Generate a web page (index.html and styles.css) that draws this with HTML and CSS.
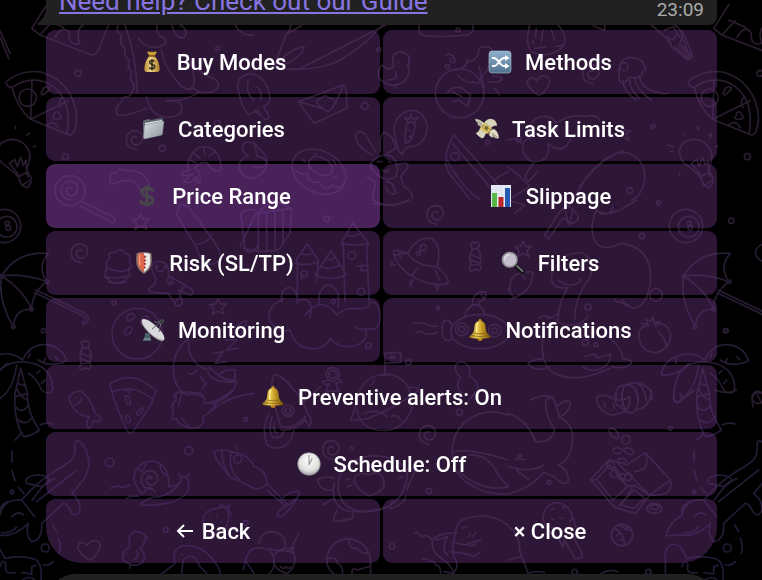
FILE: index.html
```
<!DOCTYPE html>
<html lang="en">
<head>
  <meta charset="UTF-8" />
  <title>Bot Settings</title>
  <meta name="viewport" content="width=device-width, initial-scale=1.0" />
  <link rel="stylesheet" href="styles.css">
</head>
<body>

  <!-- Chat wallpaper -->
  <svg class="wallpaper" viewBox="0 0 2286 1740" preserveAspectRatio="xMidYMin slice" aria-hidden="true">
    <defs>
      <linearGradient id="ink" gradientUnits="userSpaceOnUse" x1="0" y1="0" x2="900" y2="1700">
        <stop offset="0" stop-color="#2b1d2c" />
        <stop offset="1" stop-color="#211a38" />
      </linearGradient>
      <path id="swirl" d="M4 28Q-28 24-26-4Q-22-30 4-28Q26-22 22 0Q16 18-2 14Q-14 8-10-4Q-4-14 6-8" />
      <path id="star" d="M0-24L7-8 25-8 12 5 18 23 0 13-17 24-12 5-25-6-7-8Z" />
      <path id="candy" d="M-12-40Q-8-50 0-42Q12-50 13-36L9-26Q22-6 14 20Q22 38 10 40Q0 32-10 42Q-24 38-12 24Q-20-4-9-24ZM-14-8L14 2M-14 8L14 18M-9-24L9-26M-12 24L14 20" />
      <path id="heart" d="M0 30Q-38 4-34-12Q-26-32-6-14Q8-36 28-24Q42-8 12 24Z" />
    </defs>

    <!-- doodles that meet the left edge, repeated on the right -->
    <g id="edge" class="doodle">
      <path d="M140 15L95 85 120 105 275 165Q290 165 297 145L326 75M120 105L160 62M165 112Q190 70 208 100Q204 140 240 130Q225 90 250 75M140 60L190 82" />
      <path d="M0 92L30 160M0 112L26 175" />
      <path d="M18 246Q60 208 122 216Q195 236 220 305Q238 350 222 395Q214 410 200 402L92 358Q52 325 36 262Q20 262 18 246ZM36 262Q80 232 130 244Q190 268 202 330Q208 370 200 402M96 240L92 358L205 302M183 322A20 20 0 0 1 186 292M130 264Q148 255 148 268Q140 276 128 285Q118 280 128 272ZM164 338Q176 330 180 346Q190 354 172 358Q152 358 162 348ZM138 378Q158 355 176 384" />
      <circle cx="83" cy="293" r="26" />
      <path d="M54 530Q36 510 4 488Q-20 450 6 428Q36 408 68 428Q98 452 86 490Q76 510 84 530M54 530L84 516 95 538 66 556ZM66 556L82 564 94 546M60 530L28 490 44 478 52 500 62 472 70 496 78 480 80 520M45 380L47 386M88 400L81 405M107 438L100 441" />
      <circle cx="234" cy="220" r="9" /><circle cx="196" cy="470" r="9" />
      <circle cx="12" cy="678" r="50" /><circle cx="20" cy="680" r="31" />
      <circle cx="22" cy="670" r="6" /><circle cx="25" cy="684" r="7" />
      <path d="M5 828Q50 752 145 760Q110 800 140 845Q95 880 95 928Q45 925 40 980Q-8 900 5 828ZM5 828Q70 818 140 845M5 828Q70 870 95 928M105 878L245 945Q265 955 250 965Q245 975 255 972Q275 960 255 940L108 870" />
      <circle cx="5" cy="828" r="5" /><circle cx="142" cy="845" r="5" /><circle cx="94" cy="928" r="5" /><circle cx="40" cy="980" r="5" /><circle cx="130" cy="992" r="6" />
      <path d="M68 1080Q30 1050-12 1068Q-55 1080-62 1125Q-15 1130 20 1090M68 1080Q90 1030 140 1034Q185 1040 200 1082Q150 1105 115 1080M20 1095Q50 1080 100 1090Q160 1110 158 1170Q145 1188 125 1170Q110 1135 85 1120M20 1095Q-25 1120-24 1190Q-20 1220 0 1195Q40 1170 50 1095M-20 1075L-18 1090M90 1060L85 1072M132 1084L136 1075M165 1070L174 1080M110 1120L120 1112M125 1150L135 1140M62 1105L45 1180Q40 1260 70 1310Q95 1308 118 1290Q80 1235 82 1180L62 1105M52 1150L78 1158M46 1190L84 1180M47 1220Q65 1245 86 1215M55 1260Q80 1280 98 1250M50 1165Q60 1190 82 1200" />
      <path d="M120 1275Q140 1266 160 1272M66 1298L45 1320M36 1355V1385M36 1412Q40 1430 46 1442M55 1462L72 1480" />
      <path d="M-48 1605Q-40 1570 0 1545Q10 1495 65 1500Q115 1440 195 1395Q230 1375 225 1340Q225 1310 245 1330Q285 1385 250 1440L215 1480Q242 1500 240 1530Q225 1560 210 1530Q200 1510 190 1510L125 1570Q128 1620 95 1625Q75 1605 85 1570Q40 1615-10 1604Q-40 1610-48 1605ZM65 1500Q80 1520 104 1550M0 1545Q-5 1520 20 1505M97 1500Q130 1450 165 1435M110 1505L230 1410M80 1450Q70 1430 110 1425Q140 1425 150 1440L125 1460ZM5 1598Q35 1600 50 1580M35 1550Q55 1530 70 1545" />
      <circle cx="36" cy="1476" r="5" /><circle cx="136" cy="1644" r="12" />
      <path d="M158 1575L170 1595M175 1615Q185 1640 178 1660M160 1685Q145 1700 130 1694M-50 1740V1655Q-35 1620-5 1640L15 1675Q70 1665 105 1678Q128 1690 123 1740M0 1700Q10 1670 18 1695Q10 1725 45 1718M66 1718L95 1722V1700L108 1696M68 1740Q90 1725 105 1740" />
    </g>
    <use href="#edge" x="2046" />

    <g class="doodle">
      <path d="M355 75Q345 100 365 105Q355 130 375 145Q370 170 388 180Q378 200 395 215Q385 240 403 255Q400 280 385 290Q365 290 365 305Q340 325 352 345Q380 350 440 325M375 75Q410 170 412 280M440 290Q450 350 500 352Q550 350 545 320Q540 300 510 300M415 115Q440 150 480 140Q510 125 490 112Q470 110 470 75M485 150Q490 200 545 260Q580 280 582 250Q585 210 560 165Q590 220 640 235Q670 255 640 275Q600 285 575 262M500 302Q545 310 600 275M515 75Q530 125 555 110Q565 85 540 75M705 75Q725 110 762 105" />
      <circle cx="653" cy="145" r="6" /><circle cx="487" cy="445" r="9" /><circle cx="652" cy="370" r="9" />
      <use href="#swirl" x="405" y="420" />
      <path d="M665 510Q660 440 610 440Q575 445 562 495L568 512Q540 515 545 525Q565 530 580 520L550 545Q575 555 590 530Q590 560 600 545Q605 520 585 505Q605 480 625 492Q640 520 665 510ZM580 458L600 475M610 442L615 465M645 455L625 470M570 480L590 490" />
      <path d="M715 270Q705 230 750 220Q800 230 808 285Q815 310 790 320L808 350Q795 375 775 330L745 345Q720 310 715 270ZM745 240Q735 280 762 300M770 260Q790 275 780 300" />
      <path d="M718 490Q730 470 745 468Q715 445 735 428Q765 420 775 445Q810 470 798 500Q790 525 755 535Q715 530 718 490" />
      <circle cx="210" cy="572" r="45" /><use href="#swirl" x="210" y="572" />
      <path d="M248 605L340 650Q350 660 338 668L240 618M350 548Q325 560 332 538Q325 515 350 520Q355 500 370 512Q440 505 450 565Q430 590 415 560Q400 530 350 548" />
      <!-- castle on a cloud -->
      <path d="M892 910V790L888 780 922 732 955 780 950 845M888 790Q920 800 955 785M905 760Q922 770 940 758M945 825L993 752 1040 825Q990 845 945 825ZM965 800Q990 812 1020 795M980 775Q992 785 1005 772M1035 905L1030 735 1024 730 1058 668 1106 730 1100 740 1108 920M1024 730Q1065 740 1106 730M1040 705Q1058 712 1080 702M958 915V880Q985 830 1015 880V925M905 830V840M1070 800L1105 795M1080 810L1100 812M1085 790V815M845 900Q840 865 870 862Q890 865 892 900Q945 890 930 950M845 900Q800 920 808 960Q830 1000 870 990Q890 1055 955 1045Q985 1035 990 1015Q1020 1050 1070 1035Q1110 1020 1095 985Q1145 1000 1140 940Q1130 895 1110 910Q1105 930 1060 925Q1030 925 1010 945Q980 900 940 920L915 945M850 895L845 905M1065 980Q1085 995 1095 985" />
      <circle cx="1055" cy="767" r="12" /><circle cx="912" cy="821" r="9" /><circle cx="1083" cy="875" r="11" /><circle cx="1000" cy="905" r="6" /><circle cx="1105" cy="1037" r="8" /><circle cx="980" cy="657" r="8" />
      <!-- gift, pencils, star -->
      <path d="M720 740L768 640 820 600 875 625 870 700 835 750Q780 760 730 745M768 640L875 625M775 640V750M800 637V750M825 635V750M850 630L848 735M530 645L538 612 565 620M530 645L585 735 605 780Q640 810 665 770L650 735 565 620M585 735Q625 730 635 705M722 640Q740 625 765 630M722 640L735 745Q750 770 770 740" />
      <use href="#star" x="422" y="665" /><use href="#star" x="654" y="920" />
      <use href="#swirl" x="240" y="760" /><use href="#candy" x="256" y="1068" />
      <!-- cupcake and gingerbread man -->
      <path d="M325 805Q310 790 330 775Q318 755 345 758Q360 740 375 760Q395 760 388 785Q405 800 385 810Q355 820 325 805ZM320 800L315 830Q350 870 390 825L385 805M315 830Q355 840 390 825M325 845Q350 855 380 845" />
      <path d="M465 830Q440 790 475 784Q510 785 505 825L570 865Q590 880 570 885L535 870 548 905Q540 925 528 915L505 880 465 878Q440 875 448 865Q475 850 465 830ZM468 808Q478 820 492 808M505 855L520 850M545 870L555 858M525 905L540 892" />
      <circle cx="510" cy="840" r="8" /><circle cx="497" cy="800" r="3" /><circle cx="470" cy="800" r="3" />
      <circle cx="412" cy="1001" r="76" /><circle cx="342" cy="909" r="6" />
      <ellipse cx="392" cy="951" rx="13" ry="9" transform="rotate(-35 392 951)" /><ellipse cx="434" cy="962" rx="15" ry="10" transform="rotate(-60 434 962)" /><ellipse cx="385" cy="992" rx="14" ry="9" transform="rotate(-50 385 992)" />
      <!-- sleeping moon -->
      <path d="M565 1015Q510 1060 522 1130Q530 1170 560 1185M565 1015Q560 1090 625 1110M565 1118Q575 1130 590 1110M600 1130L620 1150 605 1165M625 1100L655 1125Q680 1105 705 1110V1140Q680 1145 655 1125M625 1120Q640 1150 710 1145Q700 1190 640 1210M640 1060L670 1055 645 1090 680 1085M675 1020L710 1020 680 1050 715 1045M700 985Q720 970 740 960Q740 985 715 1010M520 1190Q540 1160 560 1185Q600 1170 610 1190" />
      <!-- watermelon and fish -->
      <path d="M330 1152Q395 1105 468 1172L455 1210 400 1295Q388 1305 380 1290L342 1200ZM336 1175Q400 1150 456 1196M375 1190Q385 1180 390 1200Q395 1220 382 1212ZM415 1230Q440 1215 425 1235Q412 1255 410 1240ZM378 1245Q390 1245 392 1260Q385 1275 378 1260ZM375 1172L390 1165 388 1180M208 1195Q215 1170 245 1175Q275 1200 285 1240Q315 1255 295 1265L280 1262Q275 1285 265 1285Q255 1270 268 1250Q220 1245 208 1195ZM230 1190V1192M225 1215Q240 1210 245 1195" />
      <path d="M520 1240Q510 1210 530 1200Q520 1170 545 1180Q575 1170 585 1185Q620 1185 612 1210L650 1208Q640 1230 610 1250Q615 1285 575 1285Q530 1275 530 1255Q510 1265 520 1240M545 1180L535 1220M570 1285L545 1255M612 1210Q650 1210 700 1170M635 1232Q680 1190 762 1180" />
      <circle cx="737" cy="1258" r="6" /><circle cx="566" cy="1352" r="12" /><circle cx="329" cy="1387" r="13" />
      <!-- snail -->
      <path d="M420 1515Q440 1490 480 1490Q520 1480 545 1440Q535 1425 550 1430Q570 1430 565 1470Q550 1500 500 1510Q450 1518 420 1515ZM540 1428L536 1420M563 1430L568 1422M425 1480Q385 1435 415 1400Q460 1365 495 1405Q510 1430 505 1460L530 1455M415 1400Q425 1430 438 1393M480 1390Q480 1420 505 1430M430 1480Q445 1450 465 1475M455 1435Q440 1440 445 1425M332 1465Q350 1455 360 1460Q375 1465 388 1455M380 1495Q395 1485 415 1490" />
      <use href="#swirl" x="450" y="1440" />
      <!-- cornetto and ice cream -->
      <path d="M642 1355Q660 1345 695 1355Q750 1365 762 1400Q800 1410 800 1450Q790 1470 762 1465L690 1430 650 1380ZM665 1350Q665 1390 690 1430M695 1355Q680 1410 720 1440M710 1350V1340M800 1450L865 1515Q905 1485 898 1475Q870 1470 840 1500M865 1515Q830 1530 832 1548Q850 1560 895 1490M800 1470L860 1520" />
      <circle cx="713" cy="1377" r="12" />
      <path d="M610 1560Q610 1530 650 1525Q690 1510 685 1560Q680 1595 640 1600Q600 1610 610 1560M655 1525L665 1512 675 1522 690 1515 684 1530 695 1545M630 1550V1552M650 1550V1552M640 1570V1572M665 1565V1567" />
      <circle cx="497" cy="1590" r="7" /><circle cx="737" cy="1568" r="7" />
      <use href="#heart" x="268" y="1650" />
      <path d="M390 1640Q380 1600 410 1594Q440 1600 435 1615L443 1612 435 1620Q430 1640 420 1645Q445 1670 425 1690Q400 1705 370 1680Q360 1655 390 1640ZM410 1650Q420 1670 400 1680M390 1690V1705M378 1660V1662" />
      <path d="M485 1722L525 1690Q515 1650 545 1638Q600 1630 640 1680Q665 1710 662 1740M545 1720L550 1680Q580 1650 600 1700L620 1720M545 1662V1664M730 1710Q740 1650 762 1645M735 1680L762 1720" />
    </g>

    <g class="doodle" transform="translate(762 0)">
      <path d="M60 200L95 105 145 75M60 200Q110 145 150 140Q150 165 90 195M95 105Q110 90 110 75M385 75Q330 140 250 185Q180 215 70 205M395 75L140 205M495 75Q490 110 525 108Q580 112 640 105Q665 95 655 75" />
      <circle cx="375" cy="149" r="6" /><circle cx="612" cy="90" r="6" />
      <path d="M420 200Q405 160 440 155Q475 165 463 185L470 188 460 195Q475 215 450 245Q410 270 375 235Q368 210 385 195Q400 215 420 200M425 215Q435 240 400 240M425 255V265M435 185V187" />
      <path d="M133 305L268 255Q280 260 278 325L180 370ZM133 305L205 325M268 255L245 310M205 325Q175 300 200 295Q215 280 225 295Q250 290 238 320L222 335Z" />
      <circle cx="332" cy="318" r="10" />
      <path d="M0 330L15 345" />
      <ellipse cx="195" cy="515" rx="85" ry="62" transform="rotate(28 195 515)" /><ellipse cx="200" cy="498" rx="38" ry="25" transform="rotate(28 200 498)" />
      <path d="M125 510Q145 530 160 520Q165 555 195 545Q215 580 235 555Q260 575 270 545M145 480L155 485M180 465L190 460M235 480L245 490M240 530L250 535M165 500V508M0 500Q25 510 40 490Q30 470 10 470L0 430" />
      <path d="M355 465Q305 440 305 405Q315 385 335 405L365 455M380 455Q375 405 390 398Q420 405 425 445L400 460M350 490Q380 455 415 470Q440 500 425 530Q400 550 365 520Q350 510 350 490M370 485L385 485M405 485L410 488M425 495Q470 480 460 505L440 530 450 560Q475 570 475 595M340 530L365 545 355 600M385 510Q395 520 405 510M395 545Q420 545 425 580Q405 590 395 560" />
      <path d="M435 455L445 462Q450 445 465 440Q515 440 520 380Q510 330 470 331Q420 345 420 390Q425 425 435 455ZM460 370Q450 395 455 430Q475 425 485 375Q475 360 460 370ZM460 365L452 352 465 358 470 342 475 358 492 350 480 368M460 390L470 393M465 410L475 405" />
      <circle cx="617" cy="280" r="73" />
      <path d="M605 210Q640 205 640 180Q650 190 665 175Q675 165 675 145Q710 130 720 160L705 180Q710 210 680 230Q680 260 660 245Q640 255 610 225M580 280Q595 255 625 265L650 285 640 320 615 300 595 305M575 165Q595 155 605 185Q590 195 588 175M675 200L690 260M715 230Q740 225 745 240Q725 250 705 245M720 265Q730 270 735 285M595 275L625 290" />
      <circle cx="580" cy="200" r="6" /><circle cx="603" cy="470" r="12" /><circle cx="701" cy="427" r="6" />
      <path d="M600 405Q560 470 585 520L650 600M600 405L720 540Q740 525 762 515M595 430L715 570M580 480Q620 560 680 600M720 540L762 600M358 600Q410 630 465 600" />
    </g>

    <g class="doodle" transform="translate(1524 0)">
      <path d="M65 75Q50 130 70 155Q110 175 155 150Q175 130 170 110Q165 90 150 75M75 120V130M85 85L82 110M105 90L100 125M130 90L140 120M80 145L115 140M145 140L165 135M255 75Q280 90 290 90V75" />
      <use href="#heart" x="92" y="256" /><use href="#swirl" x="250" y="222" />
      <path d="M430 75L470 110Q490 130 490 140L540 180M500 75Q535 100 515 130L555 170M480 110Q490 130 505 105M500 140L545 178M510 135L550 175M470 90L495 80 515 110" />
      <path d="M335 225Q325 180 365 172Q410 175 410 205Q420 210 405 215Q395 240 365 232Q345 260 332 240ZM345 240Q345 275 385 300M365 240Q365 270 395 295M380 235Q385 270 430 300M395 230Q400 270 455 278Q470 285 480 278" />
      <circle cx="348" cy="200" r="12" /><circle cx="435" cy="379" r="6" />
      <path d="M70 415Q50 365 100 350Q130 345 145 370Q185 340 230 350Q265 340 275 360M45 455Q40 415 70 415M45 455Q60 490 85 485Q130 480 120 430Q170 470 190 410M130 390Q150 400 150 380M0 420Q30 410 40 430M75 490L50 530 60 545 90 515M0 500Q40 530 65 560L0 600" />
      <circle cx="32" cy="418" r="8" />
      <path d="M345 375L350 392 368 392 355 402 362 420 345 410" />
      <path d="M215 560Q290 450 360 458Q415 480 410 540Q400 590 370 600M200 590Q260 480 345 452" />
      <circle cx="365" cy="572" r="9" />
      <path d="M525 400L530 405M480 435L497 440M485 455L497 453M515 520V525M570 380L572 388M610 405L605 415" />
    </g>

    <g class="doodle" transform="translate(762 600)">
      <use href="#swirl" x="545" y="45" /><use href="#candy" x="663" y="172" />
      <path d="M420 155Q415 145 460 160Q490 110 530 115Q565 130 550 200Q590 235 580 250Q530 265 460 220Q415 180 420 155ZM460 160Q490 200 550 200M460 160Q445 160 425 165M490 205L475 225M545 210L555 240M435 160L440 175M415 185L412 195 425 195M470 240L468 260 478 240M545 255L550 270 555 255M360 10Q415 25 465 0" />
      <circle cx="508" cy="143" r="9" /><circle cx="493" cy="160" r="6" />
      <!-- submarine -->
      <ellipse cx="678" cy="395" rx="88" ry="51" /><circle cx="623" cy="388" r="19" /><circle cx="623" cy="388" r="9" /><circle cx="722" cy="392" r="19" /><circle cx="722" cy="392" r="8" />
      <path d="M632 345Q645 315 665 313Q690 320 692 343M655 313Q655 275 695 275Q700 300 675 305V313M680 280L690 298M594 375L585 362Q565 358 565 375V405Q570 425 590 420L595 405M475 373Q485 362 495 373Q510 362 520 375Q530 380 552 378M485 398Q500 390 510 400Q530 405 550 398" />
      <circle cx="552" cy="323" r="5" /><circle cx="463" cy="487" r="8" />
      <!-- astronaut, planet, rocket -->
      <path d="M393 525V460L440 457V487L393 490M405 475Q415 460 425 475ZM318 570Q340 525 395 522Q450 525 470 580M385 525Q395 530 405 520M350 555Q360 550 360 540M318 570Q310 610 290 660Q330 665 380 640Q440 610 490 575Q500 560 465 562M310 630Q315 680 370 690Q450 700 475 620M330 640Q370 625 400 650M410 650Q430 640 440 660" />
      <circle cx="236" cy="523" r="20" /><circle cx="236" cy="523" r="12" />
      <path d="M222 540L205 545 215 555 225 550 215 575 235 572 255 575 245 550 265 545 250 535M55 540L60 525Q80 520 120 570L145 600M55 540L50 600M60 610L80 680M145 600L160 640Q180 665 165 680L150 650M80 680Q120 690 155 650M80 690Q120 695 155 660M145 610L200 560M605 495Q615 480 635 490Q655 505 645 530Q675 540 670 570L645 600M605 495Q600 520 620 530Q600 560 625 580" />
      <circle cx="102" cy="632" r="17" /><circle cx="102" cy="632" r="8" />
      <path d="M45 640Q20 690 40 735Q80 760 110 720L120 690M55 650Q40 685 55 710Q80 720 90 695M60 670Q55 690 70 700" />
    </g>

    <g class="doodle" transform="translate(1524 600)">
      <path d="M110 105L155 35 180 15 210 45Q215 65 190 70L165 55 120 118ZM170 20L180 70M195 25L185 75M0 0L50 15 20 40M265 30Q300 60 385 0M265 30Q240 90 265 130Q290 155 340 130Q430 140 428 240Q420 320 375 325L350 310M275 40Q310 50 315 15M320 297Q325 310 335 305L360 318M345 300L350 310" />
      <circle cx="452" cy="8" r="6" /><circle cx="402" cy="108" r="8" /><circle cx="444" cy="285" r="19" /><circle cx="240" cy="321" r="9" /><circle cx="232" cy="428" r="9" /><circle cx="264" cy="434" r="6" />
      <use href="#star" x="45" y="147" />
      <path d="M5 270Q5 220 40 220Q75 210 75 220Q70 270 35 285L10 298M0 265L15 290M40 220L50 235" />
      <!-- sea serpent -->
      <path d="M165 175Q185 155 225 160Q265 180 245 235Q200 290 200 360M130 240Q130 200 155 190M130 240Q140 270 180 262Q150 310 150 360M150 240Q190 270 220 240L212 235M145 360Q170 385 215 370Q240 355 240 345M92 355Q105 345 120 350M120 355Q140 350 150 340M105 370Q100 380 115 385M240 375Q220 370 215 380M105 400Q95 480 125 510Q190 560 305 505M105 475Q70 480 60 490Q80 520 125 500M300 410Q340 440 345 475M230 470Q265 455 270 475L308 462Q310 490 280 505Q250 520 225 500M345 475Q375 480 370 490Q345 510 310 500" />
      <path d="M400 370L420 372 412 355 428 365 435 350 438 368 455 365 442 378M425 375Q390 380 392 410Q400 455 440 458Q490 450 488 400Q475 365 440 372M450 395Q475 420 475 440" />
      <path d="M325 600Q315 560 350 555Q400 535 430 575L432 600M350 555Q335 590 345 610M350 555Q385 550 390 600M385 548Q410 560 415 600M65 600Q110 580 130 590L140 600" />
      <circle cx="670" cy="62" r="8" /><circle cx="655" cy="392" r="6" /><circle cx="768" cy="158" r="25" /><circle cx="750" cy="592" r="18" />
    </g>

    <g class="doodle" transform="translate(762 1170)">
      <use href="#swirl" x="522" y="135" /><use href="#swirl" x="232" y="180" />
      <circle cx="616" cy="67" r="9" /><circle cx="292" cy="176" r="5" /><circle cx="525" cy="303" r="8" /><circle cx="414" cy="469" r="8" />
      <!-- balloon fish -->
      <path d="M260 250Q300 200 360 197Q440 200 460 250Q455 330 390 355Q310 380 270 340Q240 300 260 250ZM240 265Q210 255 190 270Q200 305 235 300M250 245Q260 230 270 235L262 250M455 240Q480 230 482 245L458 300M250 360Q235 385 240 395Q275 390 295 385Q300 375 295 365M205 345L240 325M240 280Q230 340 270 360Q330 375 400 350M455 320Q450 345 410 355Q400 345 420 335M275 270L290 265M280 290L295 285M435 265L445 260" />
      <path d="M345 318Q300 290 300 270Q310 240 345 255Q370 240 385 260Q400 290 375 305Z" />
      <!-- whale -->
      <path d="M762 75Q700 50 640 90Q590 130 595 200Q600 260 660 290Q700 315 762 312M600 185Q650 175 762 210M645 195Q700 190 730 250Q750 280 762 285M615 245Q690 310 762 290" />
      <!-- scoops, globe, walrus -->
      <path d="M15 460Q20 425 55 424Q95 430 95 470Q75 490 45 475M0 475Q35 470 55 490Q70 530 45 552M60 495Q80 470 120 490Q130 530 100 550Q70 545 60 520M80 530Q90 540 95 530Q105 540 110 530M105 485L115 470 135 428M98 475L118 475 115 490M285 445Q225 450 218 510Q220 540 240 552M285 445Q350 460 350 520V552M285 450Q285 480 310 475Q320 490 340 490M222 505Q250 500 250 520Q270 530 265 552M295 550Q290 530 310 540L345 530" />
      <path d="M482 430Q495 425 500 440Q520 430 535 450M505 508Q520 505 530 515Q540 510 545 525Q560 525 560 550M535 450Q560 425 605 430Q590 470 600 500Q620 530 595 550M535 450Q530 480 555 500Q590 520 600 550M545 450Q570 445 580 440Q560 475 580 495M605 430Q605 400 625 390Q700 360 762 405M600 455Q630 470 645 460L680 450M625 450V452M625 415L640 408M645 440L650 430M655 440L665 428M640 460Q650 475 665 462M590 485Q640 490 660 500L680 485M570 545L600 550" />
    </g>

    <g class="doodle" transform="translate(1524 1170)">
      <path d="M0 70Q60 90 82 155Q130 160 140 120Q105 60 115 30Q135 5 145 50Q180 20 187 40Q185 65 155 82Q195 100 194 150Q190 210 150 225Q185 240 180 275Q165 290 140 260L108 248Q60 300 0 312M0 230Q70 250 108 225M25 240L62 268M22 208H50M145 50L155 82M82 155L80 145" />
      <circle cx="34" cy="198" r="5" />
      <path d="M265 25Q275 10 305 20Q340 40 365 20Q370 70 310 75Q270 65 265 25ZM290 40V50M315 40L320 55M340 45V55M325 10Q315 40 335 50M345 0Q335 30 355 65M385 0Q400 40 375 68Q350 70 345 55M430 0Q430 50 385 60M500 0Q490 40 510 38L560 0M515 10L525 25M620 0Q660 15 685 0M735 50Q725 0 762 10M748 15L762 40" />
      <!-- candy box -->
      <path d="M305 208L248 268 320 352 383 370 425 315 487 270 412 188 355 225ZM305 225L265 268 315 330M248 268L262 270M305 225L358 290 315 330M358 290L378 285 425 315M378 300L410 325 378 355 335 345ZM375 290L340 345M425 315Q500 320 487 270M412 188Q430 240 380 245M320 230L358 290M330 220L425 315" />
      <circle cx="308" cy="226" r="11" /><circle cx="318" cy="251" r="11" /><circle cx="341" cy="260" r="10" /><circle cx="361" cy="261" r="11" /><circle cx="354" cy="149" r="13" />
      <ellipse cx="318" cy="130" rx="10" ry="19" transform="rotate(-40 318 130)" /><ellipse cx="328" cy="182" rx="13" ry="9" /><ellipse cx="362" cy="183" rx="15" ry="9" transform="rotate(20 362 183)" /><ellipse cx="341" cy="212" rx="13" ry="7" /><ellipse cx="439" cy="355" rx="22" ry="15" /><ellipse cx="439" cy="351" rx="13" ry="7" />
      <circle cx="487" cy="115" r="6" /><circle cx="123" cy="277" r="6" />
      <!-- popsicle and ball -->
      <path d="M105 385Q110 340 150 337Q180 345 190 370L210 430Q205 450 180 440L150 440Q115 430 105 385ZM150 440L165 472 170 450L200 505Q225 510 222 490L190 430M130 360L140 355M155 385H165M130 385L138 390M165 355L170 345M185 395L195 385M130 410L140 415" />
      <circle cx="342" cy="435" r="32" />
      <path d="M320 415Q345 425 350 465M335 405Q355 420 372 422M335 430L325 438M345 445L335 452M360 410L352 420M0 410Q35 430 35 480L60 550Q90 540 110 548M0 510L38 500M280 550Q310 535 330 545" />
      <circle cx="421" cy="546" r="8" /><circle cx="200" cy="546" r="8" />
    </g>
  </svg>

  <!-- Shared icon -->
  <svg class="sprite" aria-hidden="true">
    <defs>
      <linearGradient id="gold" x1="0" x2="1" y1="0" y2="0">
        <stop offset="0" stop-color="#8c6816" />
        <stop offset=".35" stop-color="#f0d257" />
        <stop offset=".6" stop-color="#c39722" />
        <stop offset="1" stop-color="#6c4a0c" />
      </linearGradient>
      <linearGradient id="sack" x1="0" x2="1" y1="0" y2="0">
        <stop offset="0" stop-color="#b48c34" />
        <stop offset=".4" stop-color="#f0d585" />
        <stop offset="1" stop-color="#a87c28" />
      </linearGradient>
      <linearGradient id="steel" x1="0" x2="1" y1="0" y2="1">
        <stop offset="0" stop-color="#d8dde0" />
        <stop offset="1" stop-color="#8e969d" />
      </linearGradient>
      <linearGradient id="blue" x1="0" x2="0" y1="0" y2="1">
        <stop offset="0" stop-color="#8fb0cf" />
        <stop offset="1" stop-color="#51718f" />
      </linearGradient>
      <radialGradient id="face" cx=".5" cy=".35" r=".65">
        <stop offset="0" stop-color="#ffffff" />
        <stop offset=".7" stop-color="#dededd" />
        <stop offset="1" stop-color="#a09fa1" />
      </radialGradient>
      <symbol id="bell" viewBox="0 0 24 24">
        <circle cx="12" cy="20.500" r="2.500" fill="#b67f1c" />
        <circle cx="12" cy="2.500" r="1.600" fill="#bd902a" />
        <path d="M12 3C7.500 3 6.500 6 6.200 11C6 15 3.500 16.500 1 19Q2 20.500 12 20.500Q22 20.500 23 19C20.500 16.500 18 15 17.800 11C17.500 6 16.500 3 12 3Z" fill="url(#gold)" />
        <path d="M3.500 17.500Q12 20 20.500 17.500M6 15Q12 17 18 15" fill="none" stroke="#7b5713" stroke-width=".7" />
        <path d="M10 5Q8.500 8 8.700 14" fill="none" stroke="#fff0a0" stroke-width="1.200" stroke-linecap="round" />
      </symbol>
    </defs>
  </svg>

  <main class="chat">
    <div class="message">
      <a class="guide-link" href="#guide">Need help? Check out our Guide</a>
      <time class="time">23:09</time>
      <svg class="tail" viewBox="0 0 12 16" aria-hidden="true"><path d="M12 0V16H1Q-1 15 1 14Q8 9 9 0Z" fill="#212121" /></svg>
    </div>

    <div class="keyboard">
      <button class="key" type="button">
        <svg class="icon" viewBox="0 0 24 24" aria-hidden="true">
          <path d="M7 2Q9 1 10 2Q12 1 13 2Q15 1 17 2L14.500 6H9.500Z" fill="#c99b33" />
          <path d="M9.500 6H14.500Q19.500 11 19.700 19Q19.800 22 17 22H7Q4.200 22 4.300 19Q4.500 11 9.500 6Z" fill="url(#sack)" />
          <path d="M9 6H15" stroke="#7b481d" stroke-width="1.500" stroke-linecap="round" />
          <path d="M14.500 11.500Q13.500 10.500 12 10.500Q9.700 10.500 9.700 12.400Q9.700 14 12 14.500Q14.700 15 14.700 16.800Q14.700 18.800 12 18.800Q10 18.800 9.200 17.500M12 9V20.300" fill="none" stroke="#302b1b" stroke-width="1.500" />
        </svg>
        Buy Modes
      </button>
      <button class="key" type="button">
        <svg class="icon" viewBox="0 0 24 24" aria-hidden="true">
          <rect x="1" y="1" width="22" height="22" rx="3" fill="url(#blue)" stroke="#a7bdd0" stroke-width=".6" />
          <path d="M4 8H6C10 8 12 16 16 16H18M4 16H6C10 16 12 8 16 8H18" fill="none" stroke="#fff" stroke-width="2" />
          <path d="M17 5L21.500 8 17 11ZM17 13L21.500 16 17 19Z" fill="#fff" />
        </svg>
        Methods
      </button>
      <button class="key" type="button">
        <svg class="icon" viewBox="0 0 24 24" aria-hidden="true">
          <path d="M2 5Q2 3 4 3L8 2 10 3 20 1Q22 1 22 3V17L3 22Q2 22 2 20Z" fill="#5d6870" />
          <path d="M4 6L21 3V5L4 8Z" fill="#e9eef0" />
          <path d="M4.500 7.500L22 4Q23.300 4 23 5.500L21.500 17Q21.300 18 20 18.500L4 22Q2.300 22 2.500 20.500L3.300 9Q3.500 7.800 4.500 7.500Z" fill="url(#steel)" stroke="#4e5960" stroke-width=".4" />
        </svg>
        Categories
      </button>
      <button class="key" type="button">
        <svg class="icon" viewBox="0 0 24 24" aria-hidden="true">
          <path d="M10 7Q5 2 0 2Q1 5 3 6Q2 8 5 9Q6 11 9 11Z" fill="#e3dfc8" stroke="#8b8975" stroke-width=".6" />
          <path d="M15 14Q17 12 19 12Q23 14 24 21Q21 22 19 20Q16 21 14 18Z" fill="#e3dfc8" stroke="#8b8975" stroke-width=".6" />
          <path d="M8 7Q12 1 17 2Q22 3 22 9Q19 8 16 11L10 18Q9 22 6 21L1 16Q4 15 5 11Z" fill="#b7b69c" />
          <path d="M10 5L15 2Q20 3 22 8Q18 8 16 10Z" fill="#d7d6bc" />
          <path d="M5 12L11 16 8 21Q3 20 1 16Q4 16 5 12Z" fill="#d5d4bc" />
          <path d="M9 6L17 11 13 17 5 12Z" fill="#e0c667" />
          <path d="M8 8L16 13M7 10L14 15" stroke="#927d35" stroke-width=".8" />
          <circle cx="11.500" cy="11" r="2" fill="#776d3d" />
          <path d="M2 4L7 7M4 7L8 9M17 16L22 20M17 18L20 20" stroke="#777560" stroke-width=".8" />
        </svg>
        Task Limits
      </button>
      <button class="key key-active" type="button">
        <svg class="icon" viewBox="0 0 24 24" aria-hidden="true">
          <path d="M18.500 7.500Q16.500 4.300 12 4.300Q6.700 4.300 6.700 8Q6.700 11.300 12 12.100Q17.800 13 17.800 16.300Q17.800 20 12 20Q6.800 20 5 16.500M12 1.500V22.500" fill="none" stroke="#47464b" stroke-width="3" />
        </svg>
        Price Range
      </button>
      <button class="key" type="button">
        <svg class="icon" viewBox="0 0 24 24" aria-hidden="true">
          <rect x="2" y="1" width="20" height="22" fill="#e3eaf4" />
          <path d="M2 5.500H22M2 10H22M2 14.500H22M2 19H22M7 1V23M12 1V23M17 1V23" stroke="#ccd8e6" stroke-width=".5" />
          <rect x="3" y="9" width="5" height="14" fill="#56b947" />
          <rect x="9.500" y="13" width="5" height="10" fill="#bc2826" />
          <rect x="16" y="4" width="5" height="19" fill="#2459b4" />
        </svg>
        Slippage
      </button>
      <button class="key" type="button">
        <svg class="icon" viewBox="0 0 24 24" aria-hidden="true">
          <path d="M5 2Q12 0 19 2Q20 3 19.700 11Q19.500 18 12 23Q4.500 18 4.300 11Q4 3 5 2Z" fill="#877569" />
          <path d="M6 3Q9 2 12 2V21Q6 17 5.700 11Z" fill="#dd654d" />
          <path d="M12 2Q15 2 18 3L18.300 11Q18 17 12 21Z" fill="#e9e9e8" />
          <path d="M12 4L14.500 6 12 7.500 14.500 9.500 12 11 14.500 13 12 14.500 14 16.500 12 18Z" fill="#a9362e" />
          <path d="M8 4Q7 9 8 14" fill="none" stroke="#ffa58e" stroke-width="1.200" />
        </svg>
        Risk (SL/TP)
      </button>
      <button class="key" type="button">
        <svg class="icon" viewBox="0 0 24 24" aria-hidden="true">
          <path d="M14.500 14.500L22 21.500" stroke="#161719" stroke-width="4" stroke-linecap="round" />
          <path d="M15.500 14.500L22 20.500" stroke="#8f9496" stroke-width="1.200" />
          <circle cx="8.700" cy="8.700" r="7.300" fill="#c4bdca" stroke="#929097" stroke-width="1.500" />
          <path d="M3.500 8.500Q4 4 8.500 3.500" fill="none" stroke="#e4deea" stroke-width="1.400" />
        </svg>
        Filters
      </button>
      <button class="key" type="button">
        <svg class="icon" viewBox="0 0 24 24" aria-hidden="true">
          <path d="M4 15L8 15 10 20V23H2V21Q4 20 4 15Z" fill="#48616a" />
          <path d="M3 21H9" stroke="#8ba1a8" stroke-width="1" />
          <path d="M1 2Q-1 5 5 12Q13 21 20 23Q24 24 23 19Z" fill="#999a9d" />
          <path d="M1 1.500Q5-1 15 8Q25 17 23 22Q17 22 9 15Q0 6 1 1.500Z" fill="#d9d9dc" />
          <path d="M11 11L20 4M13 4L20 4 18 14" fill="none" stroke="#66676b" stroke-width="1" />
          <path d="M18 4L21 1.500 23 3 20 6Z" fill="#303136" stroke="#58595e" stroke-width="1" />
        </svg>
        Monitoring
      </button>
      <button class="key" type="button">
        <svg class="icon" aria-hidden="true"><use href="#bell" /></svg>
        Notifications
      </button>
      <button class="key key-wide" type="button">
        <svg class="icon" aria-hidden="true"><use href="#bell" /></svg>
        Preventive alerts: On
      </button>
      <button class="key key-wide" type="button">
        <svg class="icon" viewBox="0 0 24 24" aria-hidden="true">
          <circle cx="12" cy="12" r="11.300" fill="url(#face)" stroke="#929193" stroke-width=".7" />
          <path d="M11.300 3H12.700V12.500H11.300Z" fill="#aaa9ab" />
          <path d="M11.300 12.500L14.800 6 15.800 6.500 12.600 13Z" fill="#969597" />
        </svg>
        Schedule: Off
      </button>
      <button class="key key-nav key-back" type="button">
        <svg class="arrow" viewBox="0 0 18 16" aria-hidden="true"><path d="M17 8H2M8 2L2 8 8 14" /></svg>
        Back
      </button>
      <button class="key key-nav key-close" type="button">× Close</button>
    </div>

    <div class="message next-message"></div>
  </main>
</body>
</html>
```
FILE: styles.css
```
* { box-sizing: border-box; }

body {
  margin: 0;
  min-height: 100vh;
  background-color: #000;
  color: #fff;
  font-family: Roboto, "Liberation Sans", sans-serif;
  overflow: hidden;
}

.wallpaper {
  position: fixed;
  top: 0;
  left: 0;
  width: 100%;
  height: 100%;
  z-index: -1;
}

.doodle {
  fill: none;
  stroke: url(#ink);
  stroke-width: 5;
  stroke-linecap: round;
  stroke-linejoin: round;
}

.sprite {
  position: absolute;
  width: 0;
  height: 0;
}

.chat {
  margin-top: -17px;
  padding: 0 45px 0 46px;
}

.message {
  position: relative;
  display: flex;
  justify-content: space-between;
  align-items: flex-end;
  padding: 0 13px 4px;
  background-color: #212121;
  border-radius: 0 0 8px 0;
}

.guide-link {
  padding-bottom: 2px;
  color: #8774e1;
  font-size: 26px;
  line-height: 36px;
  text-decoration: underline;
  text-decoration-thickness: 2px;
  text-underline-offset: 2px;
}

.time {
  color: #aaa;
  font-size: 19px;
  line-height: 22px;
}

.tail {
  position: absolute;
  bottom: 0;
  left: -9px;
  width: 12px;
  height: 16px;
}

.keyboard {
  display: grid;
  grid-template-columns: 1fr 1fr;
  gap: 3px;
  margin-top: 5px;
}

.key {
  display: flex;
  align-items: center;
  justify-content: center;
  gap: 13px;
  min-height: 64px;
  padding: 0 12px;
  border: none;
  border-radius: 9px;
  background-color: rgba(100, 49, 120, 0.45);
  color: #fff;
  font-family: inherit;
  font-size: 22px;
  font-weight: 500;
  cursor: pointer;
}

.key:hover,
.key-active {
  background-color: rgba(122, 57, 150, 0.6);
}

.key-wide {
  grid-column: span 2;
}

.key-nav {
  gap: 8px;
}

.key-back {
  border-bottom-left-radius: 36px;
}

.key-close {
  border-bottom-right-radius: 36px;
}

.icon {
  width: 24px;
  height: 24px;
}

.arrow {
  width: 18px;
  height: 16px;
  fill: none;
  stroke: #fff;
  stroke-width: 2;
}

.next-message {
  min-height: 60px;
  margin-top: 11px;
  border-radius: 30px 30px 0 0;
}
```
